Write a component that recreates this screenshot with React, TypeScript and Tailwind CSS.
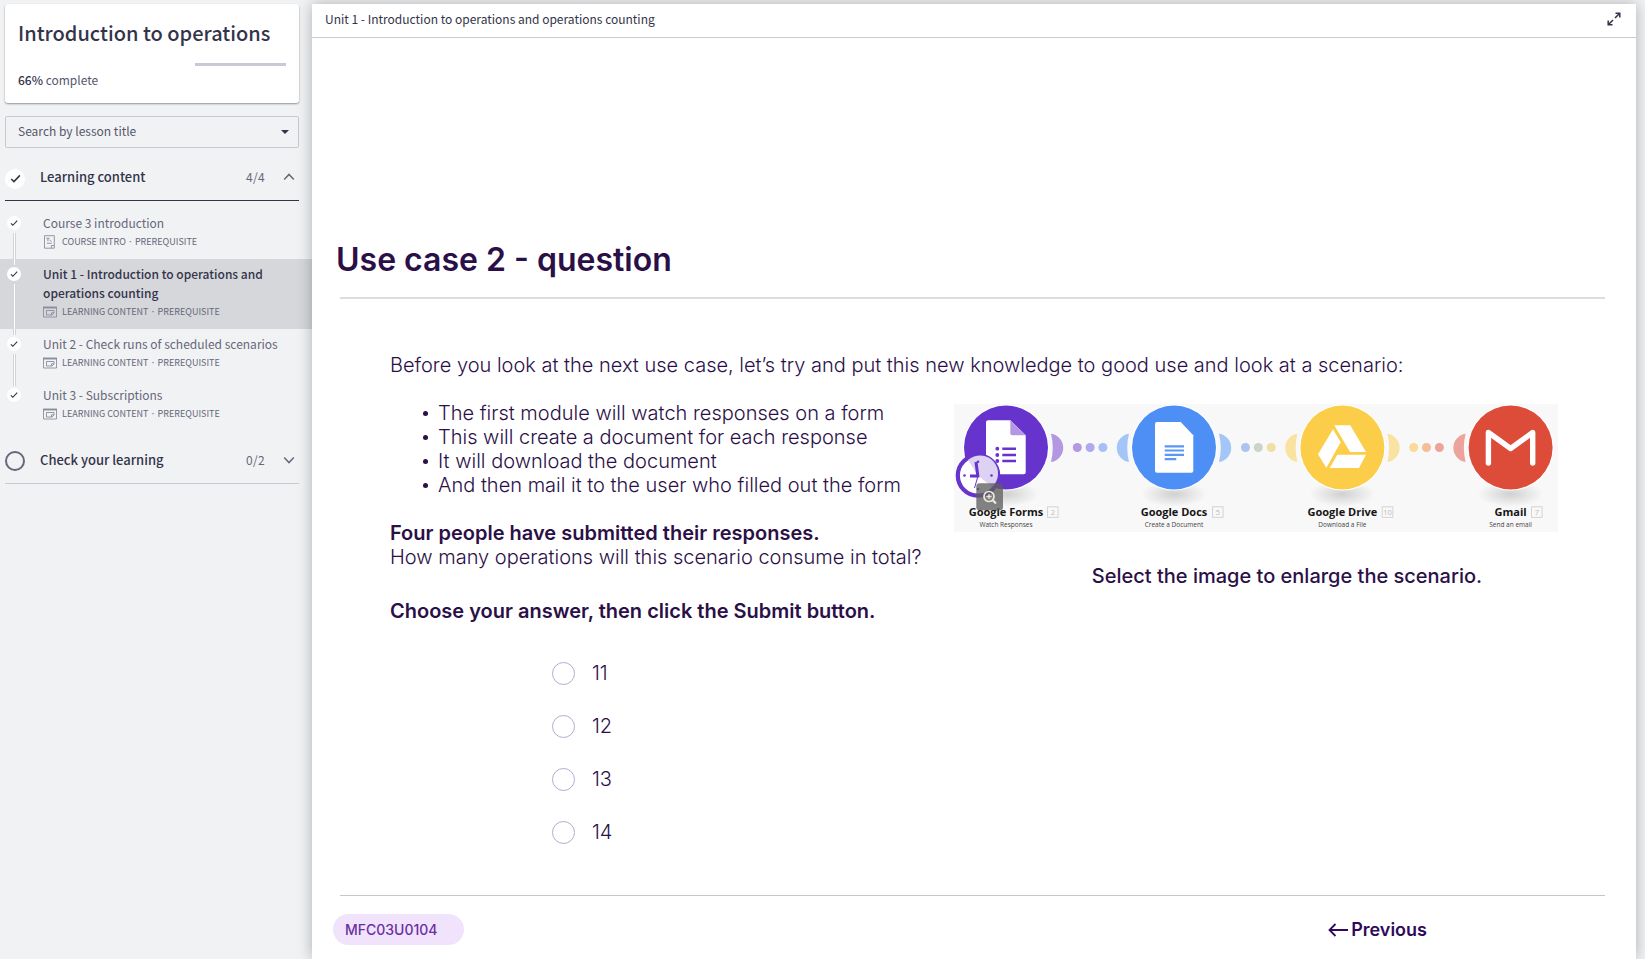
import React from "react";

const lessons = [
  { title: "Course 3 introduction", kind: "COURSE INTRO", icon: "doc", active: false },
  { title: "Unit 1 - Introduction to operations and operations counting", kind: "LEARNING CONTENT", icon: "window", active: true },
  { title: "Unit 2 - Check runs of scheduled scenarios", kind: "LEARNING CONTENT", icon: "window", active: false },
  { title: "Unit 3 - Subscriptions", kind: "LEARNING CONTENT", icon: "window", active: false },
];

const bullets = [
  "The first module will watch responses on a form",
  "This will create a document for each response",
  "It will download the document",
  "And then mail it to the user who filled out the form",
];

function Check({ className }: { className: string }) {
  return (
    <svg viewBox="0 0 12 12" className={className} fill="none" stroke="#33344a" strokeWidth="1.7" aria-hidden="true">
      <path d="M1.3 6.6 4.3 9.4 10.8 2.6" />
    </svg>
  );
}

function Chevron({ up }: { up: boolean }) {
  return (
    <svg viewBox="0 0 12 8" className="h-2 w-3" fill="none" stroke="#66677a" strokeWidth="1.5" aria-hidden="true">
      <path d={up ? "M1.2 6.4 6 1.4 10.8 6.4" : "M1.2 1.6 6 6.6 10.8 1.6"} />
    </svg>
  );
}

function LessonIcon({ kind }: { kind: string }) {
  if (kind === "doc") {
    return (
      <svg viewBox="0 0 14 14" className="h-[14px] w-[14px]" fill="none" stroke="#8c8d9c" aria-hidden="true">
        <path d="M1.500 .7h9.800v12.500H1.500z" strokeWidth=".9" />
        <path d="M3.300 3.300h3.200M4.900 3.300V6.300M6.500 5l2 1.500M4 8.300h4.800" strokeWidth=".9" />
        <path d="M8.300 13V10.500h2.800" strokeWidth=".9" />
      </svg>
    );
  }
  return (
    <svg viewBox="0 0 14 12" className="h-3 w-[14px]" fill="none" stroke="#8c8d9c" aria-hidden="true">
      <path d="M.5 1.500h13v9.500H.5z" strokeWidth=".9" />
      <path d="M0 1.500h14" strokeWidth="1.900" />
      <path d="M3.500 4.500h7.500v2.500l-2 2H3.500zM8.500 9V6.800h2.500" strokeWidth=".9" />
    </svg>
  );
}

type Module = { cx: number; color: string; soft: string; name: string; sub: string; num: string; boxX: number };

const modules: Module[] = [
  { cx: 52, color: "#6633cc", soft: "#b397e2", name: "Google Forms", sub: "Watch Responses", num: "2", boxX: 93 },
  { cx: 220, color: "#4e8ff5", soft: "#a4c5f8", name: "Google Docs", sub: "Create a Document", num: "5", boxX: 258 },
  { cx: 388.4, color: "#fbcd48", soft: "#fae2a0", name: "Google Drive", sub: "Download a File", num: "10", boxX: 427.7 },
  { cx: 556.6, color: "#dd4b39", soft: "#eda39b", name: "Gmail", sub: "Send an email", num: "7", boxX: 577 },
];

const dots = [
  [123.3, "#b398e2"], [136.1, "#aeaaf0"], [148.9, "#a6c0f7"],
  [291.5, "#aac4ef"], [304.3, "#cdd2cb"], [317.2, "#f1dea2"],
  [459.7, "#fbd99b"], [472.5, "#f5bd98"], [485.4, "#eea498"],
] as const;

function ScenarioDrawing() {
  return (
    <svg viewBox="0 0 604 128" className="block w-full" role="img" aria-label="Scenario with four modules">
      <defs>
        <radialGradient id="shade">
          <stop offset="0" stopColor="#000" stopOpacity=".16" />
          <stop offset="1" stopColor="#000" stopOpacity="0" />
        </radialGradient>
      </defs>
      <rect width="604" height="128" fill="#f8f8f8" />
      {modules.map((m, i) => (
        <g key={m.name}>
          <ellipse cx={m.cx} cy="90" rx="33" ry="13" fill="url(#shade)" />
          <circle cx={m.cx} cy="43.500" r="43" fill="#fff" />
          <circle cx={m.cx} cy="43.500" r="42" fill={m.color} />
          {i < 3 && <path transform={`translate(${m.cx} 0)`} d="M45 29.700A14.300 14.300 0 0 1 45 58Q48.500 43.500 45 29.700z" fill={m.soft} />}
          {i > 0 && <path transform={`translate(${m.cx} 0)`} d="M-45 29.700A14.300 14.300 0 0 0 -45 58Q-48.500 43.500 -45 29.700z" fill={m.soft} />}
          <text x={m.cx} y="112" textAnchor="middle" fontFamily="Open Sans, sans-serif" fontWeight="700" fontSize="11" fill="#161616">{m.name}</text>
          <text x={m.cx} y="123" textAnchor="middle" fontFamily="Open Sans, sans-serif" fontSize="6.500" fill="#444">{m.sub}</text>
          <rect x={m.boxX + 0.5} y="102.800" width="10.600" height="10.600" fill="none" stroke="#d4d4d4" />
          <text x={m.boxX + 5.8} y="110.800" textAnchor="middle" fontFamily="Open Sans, sans-serif" fontSize="7.500" fill="#bbb">{m.num}</text>
        </g>
      ))}
      {dots.map(([x, c]) => <circle key={x} cx={x} cy="43.500" r="4.500" fill={c} />)}

      <path d="M34 16.300h22.300l15.400 15v37a2 2 0 0 1-2 2H34a2 2 0 0 1-2-2v-50a2 2 0 0 1 2-2z" fill="#fff" />
      <path d="M56.300 16.300v13a2 2 0 0 0 2 2h13.400z" fill="#b397e2" />
      <g fill="#6633cc">
        <circle cx="43.300" cy="44.700" r="1.900" />
        <circle cx="43.300" cy="51" r="1.900" />
        <circle cx="43.300" cy="57" r="1.900" />
        <path d="M48.300 43.400h13.700v2.500H48.300zM48.300 49.700h13.700v2.500H48.300zM48.300 55.700h13.700v2.500H48.300z" />
      </g>
      <circle cx="24" cy="71.500" r="20.200" fill="#fff" stroke="#6633cc" strokeWidth="4.200" />
      <path d="M24 71.500 14 56a18 18 0 0 1 24 27z" fill="#ddd1f4" />
      <path d="M24 73.500 22 58M25 72h-9" stroke="#6633cc" strokeWidth="3" fill="none" />
      <path d="M24 72 20.500 84" stroke="#6633cc" strokeWidth="1" />
      <g fill="#6633cc">
        <circle cx="24" cy="57.700" r="1.300" />
        <circle cx="37.500" cy="71.500" r="1.300" />
        <circle cx="10.500" cy="71.500" r="1.300" />
        <circle cx="24" cy="85" r="1.300" />
      </g>

      <path d="M203 18h23.700l12.600 13.300v35.400a2 2 0 0 1-2 2H203a2 2 0 0 1-2-2V20a2 2 0 0 1 2-2z" fill="#fff" />
      <path d="M210.700 42.300H230M210.700 46.500H230M210.700 50.800H230M210.700 55.200h11.600" stroke="#5b97f4" strokeWidth="2.200" />

      <g fill="#fff">
        <path d="M380.300 21.300h16L412 48h-16z" />
        <path d="M379 25.300l7.700 13L372.300 63.700 364 50.300z" />
        <path d="M383.300 50.700H412L405 64h-29.300z" />
      </g>

      <path d="M534.400 59V28.500L556.600 44.500 578.700 28.500V59" fill="none" stroke="#fff" strokeWidth="5.400" strokeLinecap="round" strokeLinejoin="round" />

      <rect x="22.300" y="79.300" width="26.700" height="27" rx="3" fill="#5f5f5f" fillOpacity=".78" />
      <g fill="none" stroke="#e9ead9" strokeWidth="1.700">
        <circle cx="35" cy="92.500" r="5" />
        <path d="M38.800 96.300 42 99.500" strokeWidth="2.200" />
        <path d="M32.400 92.500h5.200M35 89.900v5.200" strokeWidth="1.300" />
      </g>
    </svg>
  );
}

function Sidebar() {
  return (
    <aside className="w-[312px] shrink-0 pt-1 font-['Noto_Sans_CJK_JP','Noto_Sans',sans-serif] text-[#33344a]">
      <div className="mx-[5px] mr-[13px]">
        <section className="h-[99px] rounded-[3px] bg-white px-[13px] pt-[13px] shadow-[0_1px_2px_rgba(0,0,0,0.4)]">
          <h1 className="whitespace-nowrap text-[20px] font-medium leading-8">Introduction to operations</h1>
          <div className="mt-3.5 flex h-[3px] justify-end">
            <div className="w-[91px] bg-[#c9c9d6]" />
          </div>
          <p className="mt-1 text-[12px] leading-5 text-[#55566c]">
            <span className="font-medium text-[#33344a]">66%</span> complete
          </p>
        </section>
        <div className="relative mt-[13px]">
          <select
            aria-label="Search by lesson title"
            className="h-8 w-full appearance-none rounded-[2px] border border-[#c9c9d6] bg-transparent pb-0.5 pl-3 text-[12px] text-[#55566c]"
          >
            <option>Search by lesson title</option>
          </select>
          <svg viewBox="0 0 8 4" className="pointer-events-none absolute right-2.5 top-3.5 h-1 w-2" fill="#33344a" aria-hidden="true">
            <path d="M0 0h8L4 4z" />
          </svg>
        </div>
        <button className="mt-2.5 flex h-[43px] w-full items-center border-b border-[#33344a] pb-px text-left">
          <span className="flex h-5 w-5 items-center justify-center rounded-full bg-white">
            <Check className="h-[11px] w-[11px]" />
          </span>
          <span className="ml-[15px] flex-1 pb-[3px] text-[13px] font-medium leading-5">Learning content</span>
          <span className="mr-[18px] pb-[3px] text-[12px] leading-5 tracking-wide text-[#66677a]">4/4</span>
          <span className="mr-1 pb-[3px]"><Chevron up /></span>
        </button>
      </div>
      <ol className="mt-[7px]">
        {lessons.map((l, i) => (
          <li key={l.title}>
            <a href="#lesson" className={l.active ? "flex bg-[#d6d7db]" : "flex"}>
              <span className="ml-[7px] flex w-[14px] flex-col items-center pt-2">
                <span className="flex h-[14px] w-[14px] shrink-0 items-center justify-center rounded-full bg-white">
                  <Check className="h-2 w-2" />
                </span>
                {i < 3 && <span className="relative z-10 -mb-1.5 mt-[3px] w-[3px] flex-1 border-x border-[#d3d4d9] bg-white" />}
              </span>
              <span className="ml-[22px] flex-1 pb-[7px] pr-6 pt-[5px]">
                <span className={l.active ? "block text-[12px] font-medium leading-[19px]" : "block whitespace-nowrap text-[12px] leading-[19px] text-[#66677a]"}>
                  {l.title}
                </span>
                <span className="flex h-5 items-center whitespace-nowrap text-[9px] text-[#66677a]">
                  <span className="mr-[5px]"><LessonIcon kind={l.icon} /></span>
                  {l.kind} · PREREQUISITE
                </span>
              </span>
            </a>
          </li>
        ))}
      </ol>
      <div className="mx-[5px] mr-[13px]">
        <button className="mt-2 flex h-[45px] w-full items-center border-b border-[#c9c9d6] text-left">
          <span className="h-5 w-5 rounded-full border-2 border-[#66677a]" />
          <span className="ml-[15px] flex-1 pb-[3px] text-[13px] font-medium leading-5">Check your learning</span>
          <span className="mr-[18px] pb-[3px] text-[12px] leading-5 tracking-wide text-[#66677a]">0/2</span>
          <span className="mr-1 pb-[3px]"><Chevron up={false} /></span>
        </button>
      </div>
    </aside>
  );
}

export default function App() {
  return (
    <div className="flex min-h-screen bg-[#f1f2f4]">
      <Sidebar />
      <div className="flex flex-1 flex-col pr-[9px] pt-1">
        <main className="relative flex flex-1 flex-col bg-white font-['Inter',sans-serif] text-[#2b1048] shadow-[0_0_14px_rgba(0,0,0,0.28)]">
          <header className="flex h-[34px] items-center justify-between border-b border-[#c9c9d6] pl-[13px] pr-[15px]">
            <p className="pb-[3px] font-['Noto_Sans_CJK_JP','Noto_Sans',sans-serif] text-[12px] leading-5 text-[#33344a]">
              Unit 1 - Introduction to operations and operations counting
            </p>
            <button aria-label="Expand" className="pb-[3px]">
              <svg viewBox="0 0 14 14" className="h-[14px] w-[14px]" fill="none" stroke="#33344a" strokeWidth="1.500">
                <path d="M8.500 1.200h4.300v4.300M12.500 1.500 8 6M5.500 12.800H1.200V8.500M1.500 12.500 6 8" />
              </svg>
            </button>
          </header>

          <div className="flex-1 pl-7 pr-[31px] pt-[202px]">
            <h2 className="-ml-1 text-[32px] font-semibold leading-10">Use case 2 - question</h2>
            <hr className="mt-[17px] border-t-2 border-[#dfdbe0]" />

            <div className="pl-[50px] pr-[47px] pt-[54px] text-[20px] leading-6">
              <p className="font-light">
                Before you look at the next use case, let’s try and put this new knowledge to good use and look at a scenario:
              </p>
              <div className="mt-6 grid grid-cols-[minmax(0,1fr)_604px]">
                <form className="whitespace-nowrap">
                  <ul className="list-none pl-[33px] font-light">
                    {bullets.map((b) => (
                      <li key={b} className="flex items-center">
                        <span className="mr-2.5 h-[5px] w-[5px] rounded-full bg-[#2b1048]" />
                        {b}
                      </li>
                    ))}
                  </ul>
                  <p className="mt-6 font-semibold">Four people have submitted their responses.</p>
                  <p className="font-light">How many operations will this scenario consume in total?</p>
                  <p className="mt-[30px] font-semibold">Choose your answer, then click the Submit button.</p>
                  <div className="mt-[38px] flex flex-col gap-[29px] pl-[162px]">
                    {["11", "12", "13", "14"].map((n) => (
                      <label key={n} className="flex h-6 items-center gap-[17px] font-light">
                        <input type="radio" name="answer" value={n} className="h-[23px] w-[23px] appearance-none rounded-full border border-[#b9a9d0] bg-white" />
                        {n}
                      </label>
                    ))}
                  </div>
                </form>
                <div>
                  <button className="mt-[3px] block w-full" aria-label="Enlarge the scenario">
                    <ScenarioDrawing />
                  </button>
                  <p className="mt-8 pl-[62px] text-center font-medium">Select the image to enlarge the scenario.</p>
                </div>
              </div>
            </div>
          </div>

          <footer className="ml-7 mr-[31px] h-16 border-t border-[#c8c4c8]">
            <div className="-ml-[7px] mt-[18px] flex items-center justify-between pr-[178px]">
              <span className="flex h-[31px] w-[131px] items-center rounded-full bg-[#f0e3fb] pl-3 text-[14px] font-medium text-[#6b2fa3]">MFC03U0104</span>
              <button className="flex items-center gap-[3px] text-[18px] font-semibold leading-6 text-[#2f0a5c]">
                <svg viewBox="0 0 20 14" className="h-[14px] w-5" fill="none" stroke="#2f0a5c" strokeWidth="1.800" aria-hidden="true">
                  <path d="M20 7H1.500M7.500 1 1.500 7l6 6" />
                </svg>
                Previous
              </button>
            </div>
          </footer>
        </main>
      </div>
    </div>
  );
}
